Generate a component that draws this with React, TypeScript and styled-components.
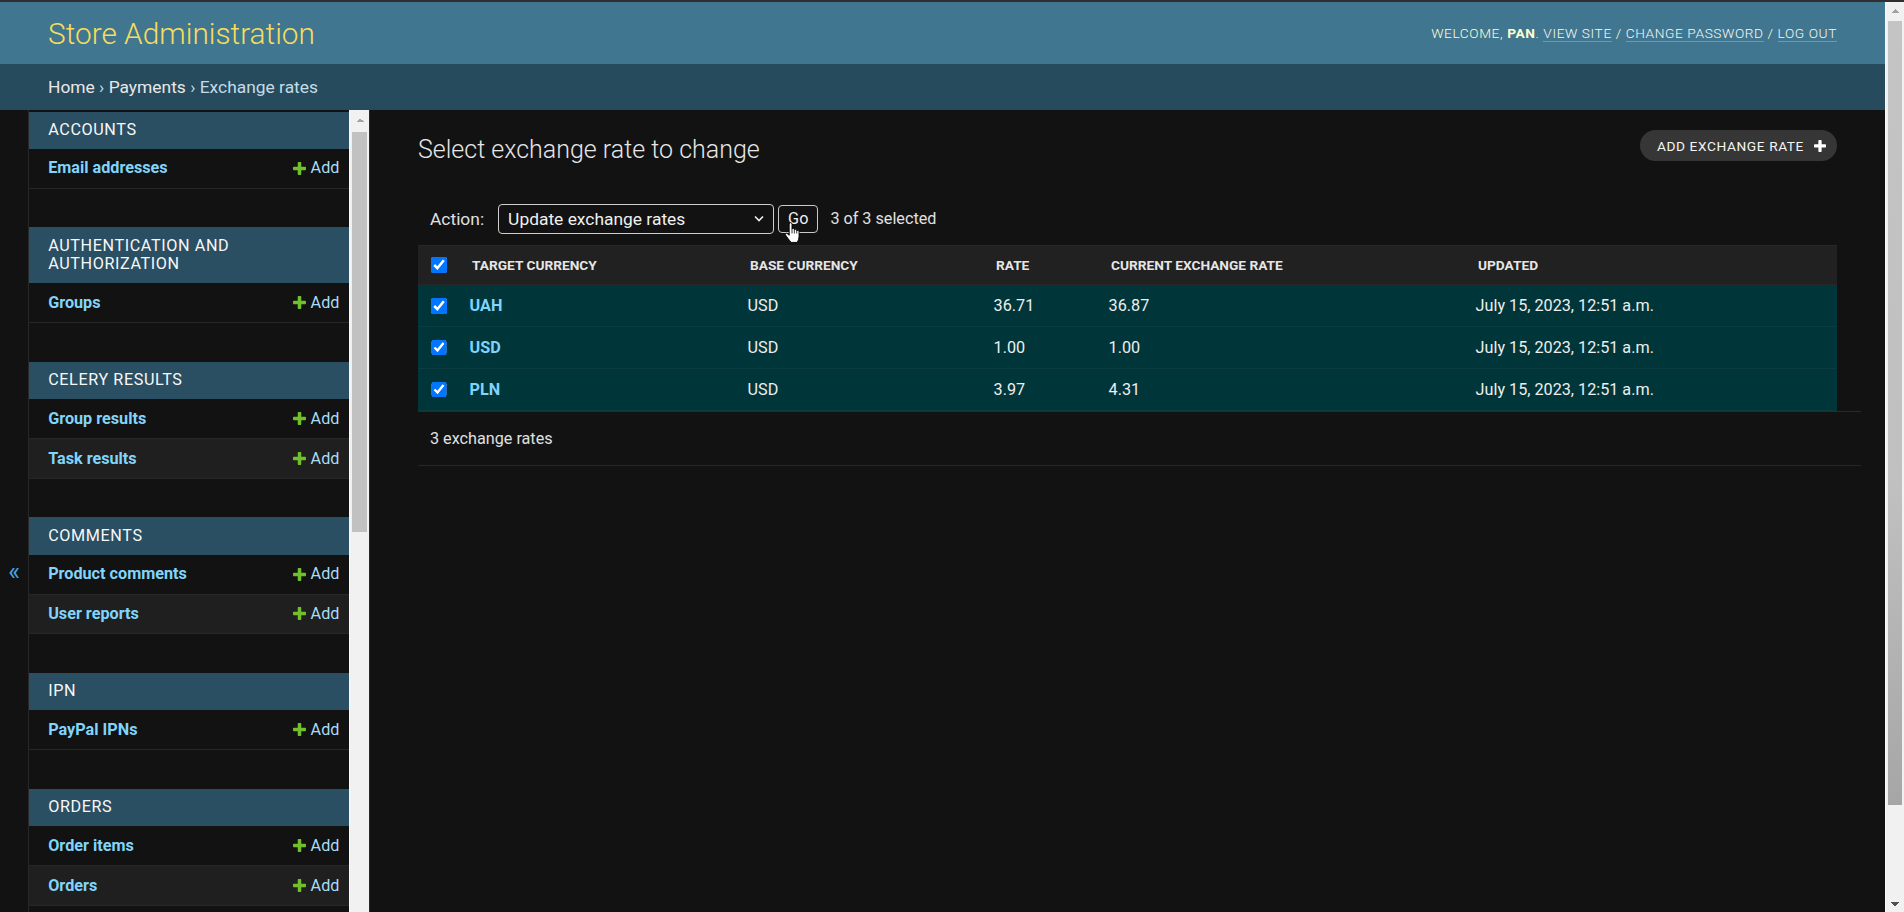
import React from 'react'
import styled, { createGlobalStyle } from 'styled-components'

const GlobalStyle = createGlobalStyle`
  * { box-sizing: border-box; }
  html, body {
    margin: 0;
    padding: 0;
    height: 100%;
    background: #121212;
  }
  body {
    border-top: 2px solid #2e2f31;
    overflow: hidden;
    font-family: Roboto, 'Liberation Sans', sans-serif;
    color: #eeeeee;
  }
  #root { height: 100%; }
  a { text-decoration: none; }
`

// the screenshot shows classic light scrollbars; headless chrome hides real ones,
// so the page and the sidebar draw their own track
const Page = styled.div`
  display: flex;
  height: 100%;
  background: #121212;
`

const PageBody = styled.div`
  flex: 1;
  min-width: 0;
  height: 100%;
  overflow: hidden;
`

const Track = styled.div<{ $width: number }>`
  flex: 0 0 ${(p) => p.$width}px;
  display: flex;
  flex-direction: column;
  background: #f1f1f1;
  border-left: 1px solid #fafafa;
`

const TrackArrow = styled.div<{ $down?: boolean; $size: number }>`
  flex: 0 0 ${(p) => p.$size}px;
  background: ${(p) =>
      p.$down
        ? 'conic-gradient(from -45deg at 50% 100%, #505050 90deg, transparent 0)'
        : 'conic-gradient(from 135deg at 50% 0, #a3a3a3 90deg, transparent 0)'}
    center / 8px 4px no-repeat;
`

const Thumb = styled.div<{ $length: number; $shade?: boolean }>`
  flex: 0 0 ${(p) => p.$length}px;
  margin: 2px 2px 0;
  background: ${(p) => (p.$shade ? 'linear-gradient(#c4c4c4, #c0c0c0 60%, #a6a6a6)' : '#c1c1c1')};
`

const TrackRest = styled.div`
  flex: 1;
`

const Header = styled.header`
  display: flex;
  justify-content: space-between;
  align-items: center;
  height: 62px;
  padding: 0 48px;
  background: #417690;
`

const Branding = styled.h1`
  margin: 0;
  font-size: 29.8px;
  font-weight: 300;
  color: #f5dd5d;
`

const UserTools = styled.div`
  font-size: 13.7px;
  font-weight: 300;
  letter-spacing: 0.6px;
  text-transform: uppercase;
  color: #ffffcc;

  strong {
    font-weight: 700;
  }
`

const ToolLink = styled.a`
  color: #f7f7f7;
  border-bottom: 1px solid rgba(255, 255, 255, 0.25);
`

const Breadcrumbs = styled.nav`
  display: flex;
  align-items: center;
  height: 46px;
  padding: 0 48px;
  background: #264b5d;
  font-size: 17.4px;
  color: #c4dce8;

  a {
    color: #e8e8e8;
  }
`

const Main = styled.div`
  display: flex;
  align-items: flex-start;
`

const ToggleNav = styled.button`
  flex: 0 0 29px;
  height: 912px;
  display: flex;
  align-items: center;
  justify-content: center;
  padding: 10px 0 0;
  border: 0;
  border-right: 1px solid #272727;
  background: #121212;
  font-family: Roboto, 'Liberation Sans', sans-serif;
  font-size: 25px;
  color: #45a5e2;
`

const NavSidebar = styled.nav`
  flex: 0 0 341px;
  display: flex;
  height: 912px;
  overflow: hidden;
  border-right: 1px solid #272727;
  background: #121212;
`

const NavList = styled.div`
  flex: 1;
  min-width: 0;
  padding-top: 1.5px;
`

const Module = styled.table`
  width: 100%;
  border-collapse: collapse;
  margin-bottom: 38.7px;
`

const Caption = styled.caption`
  text-align: left;
  padding: 9.4px 9.6px 9.4px 19.2px;
  background: #2a4e62;
  color: #f7f7f7;
  font-size: 16.2px;
  line-height: 18.4px;
  font-weight: 400;
  letter-spacing: 0.6px;
  text-transform: uppercase;
`

const NavRow = styled.tr<{ $even: boolean; $current: boolean }>`
  height: 39.6px;
  background: ${(p) => (p.$current ? '#00363a' : p.$even ? '#1f1f1f' : '#121212')};
`

const NavModel = styled.th`
  width: 100%;
  text-align: left;
  vertical-align: middle;
  padding: 0 9.6px 0 19.2px;
  font-size: 16.2px;
  line-height: 19.8px;
  font-weight: 700;
  border-bottom: 1px solid #272727;

  a {
    color: #81d4fa;
  }
`

const NavAdd = styled.td`
  padding: 0 9.6px;
  vertical-align: middle;
  white-space: nowrap;
  font-size: 16.2px;
  line-height: 19.8px;
  border-bottom: 1px solid #272727;
`

const AddLink = styled.a`
  display: flex;
  align-items: center;
  gap: 5px;
  color: #a9dcf5;

  svg {
    display: block;
    width: 13px;
    height: 13px;
  }
`

const Content = styled.main`
  flex: 1;
  min-width: 0;
  padding: 24px 48px;
`

const TitleRow = styled.div`
  display: flex;
  justify-content: space-between;
  align-items: flex-start;
  margin-bottom: 27px;
`

const Title = styled.h1`
  margin: 0;
  font-size: 25px;
  line-height: 31px;
  font-weight: 300;
  color: #e6e6e6;
`

const ObjectTool = styled.a`
  display: flex;
  align-items: center;
  gap: 10px;
  height: 31px;
  margin-top: -4px;
  padding: 0 11px 0 16.5px;
  border-radius: 16px;
  background: #363636;
  color: #f4f4f4;
  font-size: 13.7px;
  letter-spacing: 0.6px;
  text-transform: uppercase;

  svg {
    width: 12px;
    height: 12px;
  }
`

const Actions = styled.div`
  display: flex;
  align-items: center;
  height: 53px;
  padding: 0 12px;
  font-size: 17.4px;
  color: #e0e0e0;
`

const SelectWrap = styled.div`
  position: relative;
  margin-left: 14px;
`

const ActionSelect = styled.select`
  appearance: none;
  width: 276px;
  height: 30px;
  padding: 0 0 0 9px;
  border: 1px solid #cfcfcf;
  border-radius: 4px;
  background: #121212;
  color: #f0f0f0;
  font-family: Roboto, 'Liberation Sans', sans-serif;
  font-size: 17.4px;
`

const Chevron = styled.svg`
  position: absolute;
  right: 10px;
  top: 11px;
  width: 10px;
  height: 7px;
  pointer-events: none;
`

const GoWrap = styled.div`
  position: relative;
  margin-left: 4px;
`

const GoButton = styled.button`
  height: 28px;
  padding: 0 9px;
  border: 1px solid #c9c9c9;
  border-radius: 4px;
  background: #121212;
  color: #f0f0f0;
  font-family: Roboto, 'Liberation Sans', sans-serif;
  font-size: 16.2px;
`

const Cursor = styled.svg`
  position: absolute;
  left: 6px;
  top: 17px;
  width: 16px;
  height: 22px;
`

const Counter = styled.span`
  margin-left: 12px;
  font-size: 16.2px;
`

const ResultTable = styled.table`
  width: 100%;
  table-layout: fixed;
  border-collapse: collapse;
`

const HeadCell = styled.th<{ $check?: boolean }>`
  padding: ${(p) => (p.$check ? '0' : '9.6px 12px')};
  text-align: ${(p) => (p.$check ? 'center' : 'left')};
  background: #212121;
  border-top: 1px solid #272727;
  border-bottom: 1px solid #272727;
  font-size: 13.7px;
  line-height: 19.2px;
  font-weight: 700;
  text-transform: uppercase;
  color: #e6e6e6;
  white-space: nowrap;
`

const ResultRow = styled.tr`
  background: #00363a;
`

const Cell = styled.td<{ $check?: boolean }>`
  padding: ${(p) => (p.$check ? '9.6px 0' : '9.6px')};
  text-align: ${(p) => (p.$check ? 'center' : 'left')};
  vertical-align: middle;
  border-bottom: 1px solid #0d3c40;
  font-size: 16.2px;
  line-height: 19.2px;
  color: #eeeeee;
`

const RowHead = styled(Cell).attrs({ as: 'th' })`
  font-weight: 700;

  a {
    color: #81d4fa;
  }
`

const Check = styled.input`
  display: block;
  width: 15.6px;
  height: 15.6px;
  margin: 3px auto;
`

const Paginator = styled.p`
  width: 100%;
  margin: 0;
  padding: 12px;
  box-sizing: content-box;
  border-top: 1px solid #2a2a2a;
  border-bottom: 1px solid #272727;
  font-size: 16.2px;
  line-height: 29px;
  color: #e0e0e0;
`

const plusPath =
  'M1600 796v192q0 40-28 68t-68 28h-416v416q0 40-28 68t-68 28h-192q-40 0-68-28t-28-68v-416h-416q-40 0-68-28t-28-68v-192q0-40 28-68t68-28h416v-416q0-40 28-68t68-28h192q40 0 68 28t28 68v416h416q40 0 68 28t28 68z'

const PlusIcon = ({ color }: { color: string }) => (
  <svg viewBox='192 192 1408 1408' aria-hidden>
    <path fill={color} d={plusPath} />
  </svg>
)

type AdminApp = { name: string; models: string[]; current?: string }

const apps: AdminApp[] = [
  { name: 'Accounts', models: ['Email addresses'] },
  { name: 'Authentication and Authorization', models: ['Groups'] },
  { name: 'Celery Results', models: ['Group results', 'Task results'] },
  { name: 'Comments', models: ['Product comments', 'User reports'] },
  { name: 'IPN', models: ['PayPal IPNs'] },
  { name: 'Orders', models: ['Order items', 'Orders'] },
  { name: 'Payments', models: ['Exchange rates', 'Payments'], current: 'Exchange rates' },
  { name: 'Products', models: ['Brands', 'Categories', 'Product images', 'Products', 'Reviews'] },
  { name: 'Sites', models: ['Sites'] },
  {
    name: 'Social Accounts',
    models: ['Social accounts', 'Social application tokens', 'Social applications'],
  },
  { name: 'Users', models: ['Profiles', 'Users'] },
  { name: 'Wishlist', models: ['Wishlist items'] },
]

const rates = [
  { target: 'UAH', base: 'USD', rate: '36.71', current: '36.87' },
  { target: 'USD', base: 'USD', rate: '1.00', current: '1.00' },
  { target: 'PLN', base: 'USD', rate: '3.97', current: '4.31' },
]

const updated = 'July 15, 2023, 12:51 a.m.'

const Sidebar = () => (
  <NavSidebar>
    <NavList>
      {apps.map((app) => (
        <Module key={app.name}>
          <Caption>{app.name}</Caption>
          <tbody>
            {app.models.map((model, i) => (
              <NavRow key={model} $even={i % 2 === 1} $current={model === app.current}>
                <NavModel scope='row'>
                  <a href='#'>{model}</a>
                </NavModel>
                <NavAdd>
                  <AddLink href='#'>
                    <PlusIcon color='#70bf2b' />
                    Add
                  </AddLink>
                </NavAdd>
              </NavRow>
            ))}
          </tbody>
        </Module>
      ))}
    </NavList>
    <Track $width={20}>
      <TrackArrow $size={20} />
      <Thumb $length={400} />
      <TrackRest />
    </Track>
  </NavSidebar>
)

export default function ExchangeRatesAdmin() {
  return (
    <>
      <GlobalStyle />
      <Page>
        <PageBody>
          <Header>
            <Branding>Store Administration</Branding>
            <UserTools>
              Welcome, <strong>pan</strong>. <ToolLink href='#'>View site</ToolLink> /{' '}
              <ToolLink href='#'>Change password</ToolLink> / <ToolLink href='#'>Log out</ToolLink>
            </UserTools>
          </Header>
          <Breadcrumbs>
            <a href='#'>Home</a>&nbsp;›&nbsp;<a href='#'>Payments</a>&nbsp;›&nbsp;Exchange rates
          </Breadcrumbs>
          <Main>
            <ToggleNav aria-label='Toggle navigation'>«</ToggleNav>
            <Sidebar />
            <Content>
              <TitleRow>
                <Title>Select exchange rate to change</Title>
                <ObjectTool href='#'>
                  Add exchange rate
                  <PlusIcon color='#ffffff' />
                </ObjectTool>
              </TitleRow>
              <Actions>
                <label htmlFor='action'>Action:</label>
                <SelectWrap>
                  <ActionSelect id='action' defaultValue='update'>
                    <option value=''>---------</option>
                    <option value='delete'>Delete selected exchange rates</option>
                    <option value='update'>Update exchange rates</option>
                  </ActionSelect>
                  <Chevron viewBox='0 0 10 7'>
                    <path d='M1 1.5 L5 5.5 L9 1.5' fill='none' stroke='#f0f0f0' strokeWidth='1.6' />
                  </Chevron>
                </SelectWrap>
                <GoWrap>
                  <GoButton>Go</GoButton>
                  <Cursor viewBox='0 0 17 22'>
                    <path
                      d='M5.5 1.5 Q5.5 0 7 0 Q8.5 0 8.5 1.5 V7 Q8.5 6 9.75 6 Q11 6 11 7 V8 Q11 7 12.25 7 Q13.5 7 13.5 8.2 V9 Q13.5 8.2 14.7 8.2 Q16 8.2 16 9.5 V15 Q16 18 14 21 H7.5 Q6 19 4 16.5 L1.5 13 Q0.8 11.8 2 11.3 Q3 11 4 12 L5.5 13.5 Z'
                      fill='#ffffff'
                      stroke='#000000'
                      strokeWidth='1'
                    />
                    <path d='M8.5 7 V11.5 M11 8 V11.5 M13.5 9 V11.5' stroke='#000000' strokeWidth='0.8' />
                  </Cursor>
                </GoWrap>
                <Counter>3 of 3 selected</Counter>
              </Actions>
              <ResultTable>
                <colgroup>
                  <col style={{ width: 42 }} />
                  <col style={{ width: 278 }} />
                  <col style={{ width: 246 }} />
                  <col style={{ width: 115 }} />
                  <col style={{ width: 367 }} />
                  <col />
                </colgroup>
                <thead>
                  <tr>
                    <HeadCell $check>
                      <Check type='checkbox' checked readOnly />
                    </HeadCell>
                    <HeadCell>Target currency</HeadCell>
                    <HeadCell>Base currency</HeadCell>
                    <HeadCell>Rate</HeadCell>
                    <HeadCell>Current exchange rate</HeadCell>
                    <HeadCell>Updated</HeadCell>
                  </tr>
                </thead>
                <tbody>
                  {rates.map((r) => (
                    <ResultRow key={r.target}>
                      <Cell $check>
                        <Check type='checkbox' checked readOnly />
                      </Cell>
                      <RowHead>
                        <a href='#'>{r.target}</a>
                      </RowHead>
                      <Cell>{r.base}</Cell>
                      <Cell>{r.rate}</Cell>
                      <Cell>{r.current}</Cell>
                      <Cell>{updated}</Cell>
                    </ResultRow>
                  ))}
                </tbody>
              </ResultTable>
              <Paginator>3 exchange rates</Paginator>
            </Content>
          </Main>
        </PageBody>
        <Track $width={19}>
          <TrackArrow $size={17} />
          <Thumb $length={784} $shade />
          <TrackRest />
          <TrackArrow $size={17} $down />
        </Track>
      </Page>
    </>
  )
}
